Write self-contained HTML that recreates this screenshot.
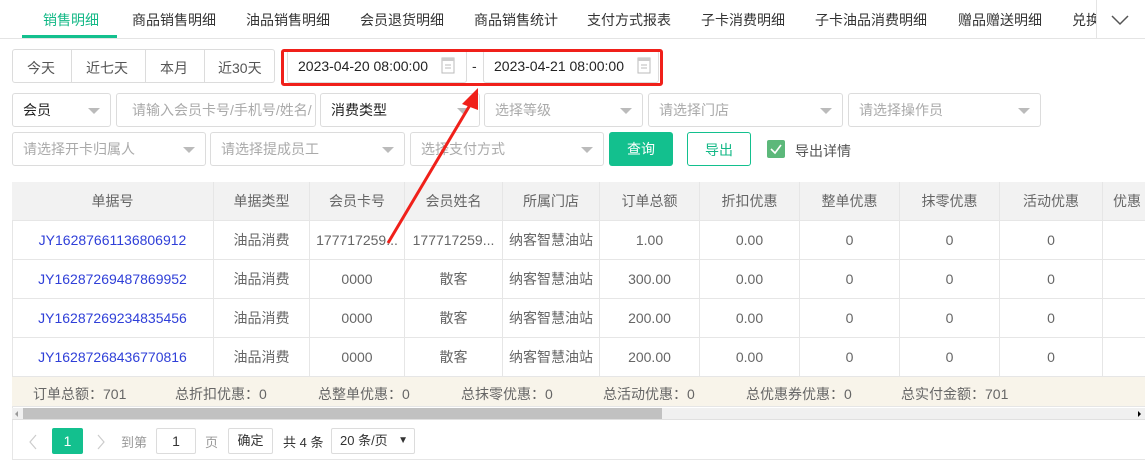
<!DOCTYPE html><html><head><meta charset="utf-8"><style>
*{box-sizing:border-box;margin:0;padding:0}
body{width:1145px;height:462px;overflow:hidden;background:#fff;font-family:"Liberation Sans","Noto Sans CJK SC",sans-serif;font-size:14px;color:#333;position:relative}
.a{position:absolute}
.tab{position:absolute;top:10px;font-size:14px;color:#333}
.box{position:absolute;border:1px solid #dcdcdc;border-radius:3px;background:#fff;color:#aaa;font-size:14px;line-height:32px;padding-left:10px}
.box .tri{position:absolute;right:10px;top:14px;width:0;height:0;border-left:6px solid transparent;border-right:6px solid transparent;border-top:6px solid #bbb}
.cell{position:absolute;text-align:center;border-right:1px solid #e6e6e6;border-bottom:1px solid #e6e6e6;line-height:38px;font-size:14px;color:#666;white-space:nowrap;overflow:hidden}
</style></head><body>
<div class="a" style="left:0;top:38px;width:1096px;height:1px;background:#e4e4e4"></div>
<div class="tab" style="left:43px;color:#13b886">销售明细</div>
<div class="a" style="left:22px;top:35px;width:95px;height:3px;background:#13c08e"></div>
<div class="tab" style="left:132px">商品销售明细</div>
<div class="tab" style="left:246px">油品销售明细</div>
<div class="tab" style="left:360px">会员退货明细</div>
<div class="tab" style="left:474px">商品销售统计</div>
<div class="tab" style="left:587px">支付方式报表</div>
<div class="tab" style="left:701px">子卡消费明细</div>
<div class="tab" style="left:815px">子卡油品消费明细</div>
<div class="tab" style="left:958px">赠品赠送明细</div>
<div class="tab" style="left:1072px;width:24px;overflow:hidden;white-space:nowrap">兑换</div>
<div class="a" style="left:1096px;top:0;width:49px;height:39px;border-left:1px solid #e4e4e4;border-bottom:1px solid #e4e4e4;background:#fff"></div>
<svg class="a" style="left:1110px;top:14px" width="20" height="12"><path d="M2 2 L10 10 L18 2" fill="none" stroke="#555" stroke-width="1.5"/></svg>

<div class="a" style="left:12px;top:49px;width:263px;height:34px;border:1px solid #dcdcdc;border-radius:3px"></div>
<div class="a" style="left:71px;top:49px;width:1px;height:34px;background:#dcdcdc"></div>
<div class="a" style="left:145px;top:49px;width:1px;height:34px;background:#dcdcdc"></div>
<div class="a" style="left:204px;top:49px;width:1px;height:34px;background:#dcdcdc"></div>
<div class="a" style="left:27px;top:58px;color:#555">今天</div>
<div class="a" style="left:86px;top:58px;color:#555">近七天</div>
<div class="a" style="left:160px;top:58px;color:#555">本月</div>
<div class="a" style="left:218px;top:58px;color:#555">近30天</div>

<div class="a" style="left:287px;top:50px;width:180px;height:33px;border:1px solid #dcdcdc;border-radius:3px"></div>
<div class="a" style="left:483px;top:50px;width:176px;height:33px;border:1px solid #dcdcdc;border-radius:3px"></div>
<div class="a" style="left:298px;top:58px;color:#222">2023-04-20 08:00:00</div>
<div class="a" style="left:494px;top:58px;color:#222">2023-04-21 08:00:00</div>
<svg class="a" style="left:441px;top:57px" width="14" height="17"><rect x="1" y="1" width="12" height="15" fill="none" stroke="#bbb"/><rect x="1" y="1" width="12" height="3" fill="#ccc"/><path d="M4 8H10M4 11H10" stroke="#bbb"/></svg>
<svg class="a" style="left:637px;top:57px" width="14" height="17"><rect x="1" y="1" width="12" height="15" fill="none" stroke="#bbb"/><rect x="1" y="1" width="12" height="3" fill="#ccc"/><path d="M4 8H10M4 11H10" stroke="#bbb"/></svg>
<div class="a" style="left:472px;top:58px;color:#333">-</div>
<div class="a" style="left:281px;top:49px;width:382px;height:37px;border:3px solid #f0201a;border-radius:3px"></div>

<div class="box" style="left:12px;top:93px;width:99px;height:34px;color:#222">会员<span class="tri"></span></div>
<div class="box" style="left:116px;top:93px;width:200px;height:34px;white-space:nowrap;overflow:hidden;padding-left:15px">请输入会员卡号/手机号/姓名/</div>
<div class="box" style="left:320px;top:93px;width:160px;height:34px;color:#222">消费类型<span class="tri"></span></div>
<div class="box" style="left:484px;top:93px;width:159px;height:34px">选择等级<span class="tri"></span></div>
<div class="box" style="left:648px;top:93px;width:195px;height:34px">请选择门店<span class="tri"></span></div>
<div class="box" style="left:848px;top:93px;width:193px;height:34px">请选择操作员<span class="tri"></span></div>
<div class="box" style="left:12px;top:132px;width:194px;height:34px">请选择开卡归属人<span class="tri"></span></div>
<div class="box" style="left:210px;top:132px;width:195px;height:34px">请选择提成员工<span class="tri"></span></div>
<div class="box" style="left:410px;top:132px;width:194px;height:34px">选择支付方式<span class="tri"></span></div>
<div class="a" style="left:609px;top:132px;width:64px;height:34px;background:#13c08e;border-radius:3px;color:#fff;text-align:center;line-height:34px">查询</div>
<div class="a" style="left:687px;top:132px;width:64px;height:34px;border:1px solid #13c08e;border-radius:3px;color:#13b886;text-align:center;line-height:34px">导出</div>
<div class="a" style="left:767px;top:140px;width:18px;height:18px;background:#5cb87a;border-radius:2px"></div>
<svg class="a" style="left:767px;top:140px" width="18" height="18"><path d="M4 9 L8 13 L14 5" fill="none" stroke="#fff" stroke-width="1.6"/></svg>
<div class="a" style="left:795px;top:141px;color:#555">导出详情</div>

<div class="a" style="left:12px;top:182px;width:1133px;height:278px;border:1px solid #e6e6e6;border-right:none"></div>
<div class="a" style="left:12px;top:182px;width:1133px;height:39px;background:#f2f2f2"></div>
<div id="t"></div>
<div class="a" style="left:12px;top:377px;width:1133px;height:30px;background:#f8f4ea;border-bottom:1px solid #e6e6e6"></div>
<div class="a" style="left:33px;top:384px;color:#666">订单总额：701</div>
<div class="a" style="left:175px;top:384px;color:#666">总折扣优惠：0</div>
<div class="a" style="left:318px;top:384px;color:#666">总整单优惠：0</div>
<div class="a" style="left:461px;top:384px;color:#666">总抹零优惠：0</div>
<div class="a" style="left:603px;top:384px;color:#666">总活动优惠：0</div>
<div class="a" style="left:746px;top:384px;color:#666">总优惠券优惠：0</div>
<div class="a" style="left:901px;top:384px;color:#666">总实付金额：701</div>
<div class="a" style="left:12px;top:408px;width:1133px;height:12px;background:#f0f0f0;border-bottom:1px solid #e0e0e0"></div>
<div class="a" style="left:23px;top:408px;width:639px;height:11px;background:#c1c1c1"></div>
<div class="a" style="left:15px;top:411px;width:0;height:0;border-top:3px solid transparent;border-bottom:3px solid transparent;border-right:3px solid #999"></div>
<div class="a" style="left:1138px;top:411px;width:0;height:0;border-top:3px solid transparent;border-bottom:3px solid transparent;border-left:3px solid #000"></div>

<svg class="a" style="left:28px;top:434px" width="10" height="16"><path d="M8 1 L2 8 L8 15" fill="none" stroke="#ccc" stroke-width="1.2"/></svg>
<div class="a" style="left:52px;top:428px;width:31px;height:26px;background:#13c08e;border-radius:2px;color:#fff;text-align:center;line-height:26px">1</div>
<svg class="a" style="left:96px;top:434px" width="10" height="16"><path d="M2 1 L8 8 L2 15" fill="none" stroke="#ccc" stroke-width="1.2"/></svg>
<div class="a" style="left:121px;top:432px;color:#999;font-size:13px">到第</div>
<div class="a" style="left:156px;top:428px;width:40px;height:26px;border:1px solid #dcdcdc;border-radius:2px;text-align:center;line-height:24px;color:#333">1</div>
<div class="a" style="left:205px;top:432px;color:#999;font-size:13px">页</div>
<div class="a" style="left:228px;top:428px;width:45px;height:26px;border:1px solid #dcdcdc;border-radius:2px;text-align:center;line-height:24px;font-size:13px;color:#333">确定</div>
<div class="a" style="left:283px;top:432px;color:#333;font-size:13px">共 4 条</div>
<div class="a" style="left:331px;top:428px;width:84px;height:26px;border:1px solid #dcdcdc;border-radius:2px;line-height:24px;font-size:13px;color:#333;padding-left:8px">20 条/页 <span style="position:absolute;right:6px;font-size:10px">▼</span></div>

<svg class="a" style="left:0;top:0" width="1145" height="462"><line x1="388" y1="243" x2="470" y2="105" stroke="#f0201a" stroke-width="3"/><path d="M478 88 L462 104 L478 110 Z" fill="#f0201a"/></svg>
<script>
var cols=[[12,202,'单据号'],[214,96,'单据类型'],[310,95,'会员卡号'],[405,98,'会员姓名'],[503,97,'所属门店'],[600,100,'订单总额'],[700,100,'折扣优惠'],[800,100,'整单优惠'],[900,100,'抹零优惠'],[1000,103,'活动优惠'],[1103,60,'优惠']];
var rows=[['JY16287661136806912','油品消费','177717259...','177717259...','纳客智慧油站','1.00','0.00','0','0','0',''],
['JY16287269487869952','油品消费','0000','散客','纳客智慧油站','300.00','0.00','0','0','0',''],
['JY16287269234835456','油品消费','0000','散客','纳客智慧油站','200.00','0.00','0','0','0',''],
['JY16287268436770816','油品消费','0000','散客','纳客智慧油站','200.00','0.00','0','0','0','']];
var h='';
cols.forEach(function(c){h+='<div class="cell" style="left:'+c[0]+'px;top:182px;width:'+c[1]+'px;height:39px;'+(c[0]==1103?'text-align:left;padding-left:10px':'')+'">'+c[2]+'</div>';});
rows.forEach(function(r,i){cols.forEach(function(c,j){h+='<div class="cell" style="left:'+c[0]+'px;top:'+(221+i*39)+'px;width:'+c[1]+'px;height:39px;'+(j==0?'color:#2f3fd8':'')+'">'+r[j]+'</div>';});});
document.getElementById('t').innerHTML=h;
</script>
</body></html>
